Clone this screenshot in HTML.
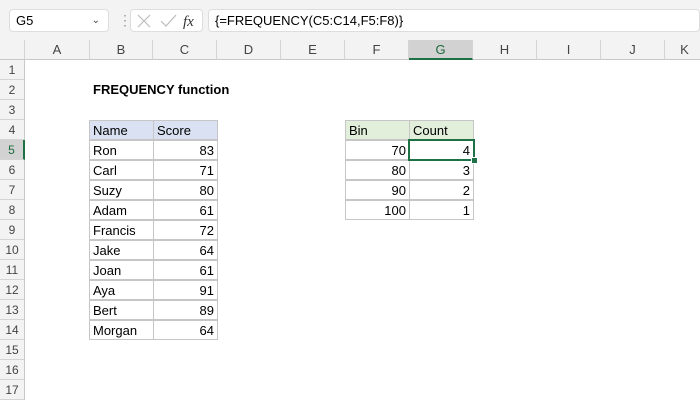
<!DOCTYPE html><html><head><style>
body{margin:0;width:700px;height:400px;overflow:hidden;background:#fff;font-family:"Liberation Sans",sans-serif;font-size:13px;position:relative}
.a{position:absolute}
.ch{position:absolute;top:40px;height:20px;line-height:20px;text-align:center;color:#444;border-right:1px solid #d4d4d4;background:#f3f3f3;border-bottom:1px solid #c8c8c8;box-sizing:border-box}
.rh{position:absolute;left:0;width:25px;height:20px;line-height:20px;text-align:center;color:#444;font-size:12px;background:#f3f3f3;border-bottom:1px solid #d4d4d4;border-right:1px solid #c8c8c8;box-sizing:border-box}
.c{position:absolute;height:20px;line-height:20px;box-sizing:border-box;border:1px solid #c6c6c6;padding:0 3px;font-size:13px;color:#000}
.r{text-align:right}
</style></head><body>
<div class="a" style="left:0;top:0;width:700px;height:40px;background:#f3f3f3"></div>
<div class="a" style="left:9px;top:9px;width:100px;height:23px;background:#fff;border:1px solid #ddd;border-radius:4px;box-sizing:border-box;line-height:21px;padding-left:6px;font-size:13px">G5<span style="position:absolute;right:8px;top:0;font-size:10px;color:#444">&#8964;</span></div>
<div class="a" style="left:118px;top:12px;color:#999;font-size:14px">&#8942;</div>
<div class="a" style="left:130px;top:9px;width:73px;height:23px;background:#fff;border:1px solid #ddd;border-radius:4px;box-sizing:border-box"></div>
<svg class="a" style="left:136px;top:13px" width="64" height="16"><path d="M2 2L14 14M14 2L2 14" stroke="#bbb" stroke-width="1.2"/><path d="M25 8L30 13L40 2" stroke="#bbb" stroke-width="1.2" fill="none"/><text x="47" y="13" font-family="Liberation Serif" font-style="italic" font-size="15" fill="#333">fx</text></svg>
<div class="a" style="left:208px;top:9px;width:492px;height:23px;background:#fff;border:1px solid #ddd;border-radius:4px;box-sizing:border-box;line-height:21px;padding-left:6px">{=FREQUENCY(C5:C14,F5:F8)}</div>
<div class="ch" style="left:0;width:25px"></div>
<div class="ch" style="left:25px;width:65px">A</div>
<div class="ch" style="left:90px;width:63px">B</div>
<div class="ch" style="left:153px;width:64px">C</div>
<div class="ch" style="left:217px;width:64px">D</div>
<div class="ch" style="left:281px;width:64px">E</div>
<div class="ch" style="left:345px;width:64px">F</div>
<div class="ch" style="left:409px;width:64px;background:#d2d2d2;color:#1e6b3e;border-bottom:2px solid #1e7145">G</div>
<div class="ch" style="left:473px;width:64px">H</div>
<div class="ch" style="left:537px;width:64px">I</div>
<div class="ch" style="left:601px;width:64px">J</div>
<div class="ch" style="left:665px;width:40px">K</div>
<div class="rh" style="top:60px">1</div><div class="rh" style="top:80px">2</div><div class="rh" style="top:100px">3</div><div class="rh" style="top:120px">4</div>
<div class="rh" style="top:140px;background:#d2d2d2;color:#1e6b3e;border-right:2px solid #1e7145">5</div>
<div class="rh" style="top:160px">6</div><div class="rh" style="top:180px">7</div><div class="rh" style="top:200px">8</div><div class="rh" style="top:220px">9</div><div class="rh" style="top:240px">10</div><div class="rh" style="top:260px">11</div><div class="rh" style="top:280px">12</div><div class="rh" style="top:300px">13</div><div class="rh" style="top:320px">14</div><div class="rh" style="top:340px">15</div><div class="rh" style="top:360px">16</div><div class="rh" style="top:380px">17</div>
<div class="a" style="left:93px;top:82px;font-weight:bold">FREQUENCY function</div>
<div class="c" style="left:89px;top:120px;width:65px;background:#d9e1f2">Name</div>
<div class="c" style="left:153px;top:120px;width:65px;background:#d9e1f2">Score</div>
<div class="c" style="left:89px;top:140px;width:65px">Ron</div><div class="c r" style="left:153px;top:140px;width:65px">83</div>
<div class="c" style="left:89px;top:160px;width:65px">Carl</div><div class="c r" style="left:153px;top:160px;width:65px">71</div>
<div class="c" style="left:89px;top:180px;width:65px">Suzy</div><div class="c r" style="left:153px;top:180px;width:65px">80</div>
<div class="c" style="left:89px;top:200px;width:65px">Adam</div><div class="c r" style="left:153px;top:200px;width:65px">61</div>
<div class="c" style="left:89px;top:220px;width:65px">Francis</div><div class="c r" style="left:153px;top:220px;width:65px">72</div>
<div class="c" style="left:89px;top:240px;width:65px">Jake</div><div class="c r" style="left:153px;top:240px;width:65px">64</div>
<div class="c" style="left:89px;top:260px;width:65px">Joan</div><div class="c r" style="left:153px;top:260px;width:65px">61</div>
<div class="c" style="left:89px;top:280px;width:65px">Aya</div><div class="c r" style="left:153px;top:280px;width:65px">91</div>
<div class="c" style="left:89px;top:300px;width:65px">Bert</div><div class="c r" style="left:153px;top:300px;width:65px">89</div>
<div class="c" style="left:89px;top:320px;width:65px">Morgan</div><div class="c r" style="left:153px;top:320px;width:65px">64</div>
<div class="c" style="left:345px;top:120px;width:65px;background:#e2efda">Bin</div>
<div class="c" style="left:409px;top:120px;width:65px;background:#e2efda">Count</div>
<div class="c r" style="left:345px;top:140px;width:65px">70</div><div class="c r" style="left:409px;top:140px;width:65px">4</div>
<div class="c r" style="left:345px;top:160px;width:65px">80</div><div class="c r" style="left:409px;top:160px;width:65px">3</div>
<div class="c r" style="left:345px;top:180px;width:65px">90</div><div class="c r" style="left:409px;top:180px;width:65px">2</div>
<div class="c r" style="left:345px;top:200px;width:65px">100</div><div class="c r" style="left:409px;top:200px;width:65px">1</div>
<div class="a" style="left:408px;top:139px;width:67px;height:22px;border:2px solid #1e7145;box-sizing:border-box"></div>
<div class="a" style="left:471px;top:157px;width:5px;height:5px;background:#1e7145;border:1px solid #fff"></div>
</body></html>
